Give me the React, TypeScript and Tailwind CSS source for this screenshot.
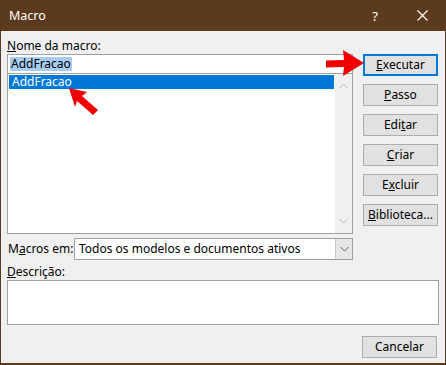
import React from "react";

const font = { fontFamily: '"Noto Sans", "Open Sans", sans-serif' };

function Btn({ children, focused }: { children: React.ReactNode; focused?: boolean }) {
  return (
    <div
      className={
        "flex h-[22px] w-[75px] items-center justify-center bg-[#e1e1e1] text-[12px] text-black " +
        (focused ? "border-2 border-[#0078d7]" : "border border-[#adadad]")
      }
    >
      {children}
    </div>
  );
}

function Chevron({ up, color }: { up?: boolean; color: string }) {
  return (
    <svg width="9" height="6" viewBox="0 0 9 6">
      <path
        d={up ? "M0.5 5 L4.5 1 L8.5 5" : "M0.5 1 L4.5 5 L8.5 1"}
        fill="none"
        stroke={color}
        strokeWidth="1"
      />
    </svg>
  );
}

export default function App() {
  return (
    <div
      className="relative h-[365px] w-[446px] overflow-hidden border-x border-b-2 border-[#5b3a1d] bg-[#f0f0f0] text-[12px] leading-[16px] text-black"
      style={font}
    >
      {/* title bar */}
      <div className="-mx-px flex h-[31px] items-center bg-[#5b3a1d] pl-[9px] text-white">
        <span className="text-[12.5px]">Macro</span>
        <span className="ml-auto mr-[39px] text-[13px]">?</span>
        <svg width="11" height="11" viewBox="0 0 11 11" className="mr-[18px]">
          <path d="M0.5 0.5 L10.5 10.5 M10.5 0.5 L0.5 10.5" stroke="white" strokeWidth="1.1" />
        </svg>
      </div>

      <div className="pl-[6px] pr-[7px] pt-[7px]">
        <div className="flex">
          {/* left column */}
          <div className="w-[346px]">
            <div>
              <span className="underline">N</span>ome da macro:
            </div>
            <div className="flex h-[20px] items-center border border-[#a0a0a0] bg-white pl-[2px]">
              <span className="bg-[#a6cdf0] px-[1px] leading-[14px]">AddFracao</span>
            </div>
            <div className="flex h-[160px] border border-t-0 border-[#a0a0a0] bg-white">
              <div className="flex-1 p-px">
                <div className="h-[14px] bg-[#0078d7] pl-[3px] leading-[14px] text-white">AddFracao</div>
              </div>
              <div className="flex w-[17px] flex-col items-center justify-between bg-[#f0f0f0] py-[9px]">
                <Chevron up color="#b4b4b4" />
                <Chevron color="#b4b4b4" />
              </div>
            </div>
          </div>

          {/* buttons */}
          <div className="ml-[10px] flex flex-col gap-[8px] pt-[16px]">
            <Btn focused>
              <span>
                <span className="underline">E</span>xecutar
              </span>
            </Btn>
            <Btn>
              <span>
                <span className="underline">P</span>asso
              </span>
            </Btn>
            <Btn>
              <span>
                Edi<span className="underline">t</span>ar
              </span>
            </Btn>
            <Btn>
              <span>
                <span className="underline">C</span>riar
              </span>
            </Btn>
            <Btn>
              <span>
                E<span className="underline">x</span>cluir
              </span>
            </Btn>
            <Btn>
              <span>
                <span className="underline">B</span>iblioteca...
              </span>
            </Btn>
          </div>
        </div>

        {/* macros em */}
        <div className="mt-[4px] flex w-[346px] items-center">
          <div className="w-[67px] pl-px">
            M<span className="underline">a</span>cros em:
          </div>
          <div className="flex h-[22px] flex-1 items-center border border-[#a0a0a0] bg-white">
            <span className="flex-1 pl-[4px]">Todos os modelos e documentos ativos</span>
            <div className="flex h-full w-[17px] items-center justify-center border-l border-[#c8c8c8] bg-[#e6e6e6]">
              <Chevron color="#606060" />
            </div>
          </div>
        </div>

        <div className="mt-[4px]">
          <span className="underline">D</span>escrição:
        </div>
        <div className="h-[45px] w-[432px] border border-[#a0a0a0] bg-white" />

        <div className="mt-[11px] flex justify-end pr-[1px]">
          <Btn>Cancelar</Btn>
        </div>
      </div>

      {/* red arrows */}
      <svg className="absolute left-[323px] top-[48px]" width="42" height="30" viewBox="0 0 42 30">
        <path d="M2 12.5 L20 12 L19 2 L40 15 L19 28 L20 19 L2 19.5 Z" fill="#f00000" />
      </svg>
      <svg className="absolute left-[64px] top-[84px]" width="38" height="34" viewBox="0 0 38 34">
        <path d="M4 4 L22 8 L17 12 L33 26 L28 31 L12 17 L10 23 Z" fill="#f00000" />
      </svg>
    </div>
  );
}
